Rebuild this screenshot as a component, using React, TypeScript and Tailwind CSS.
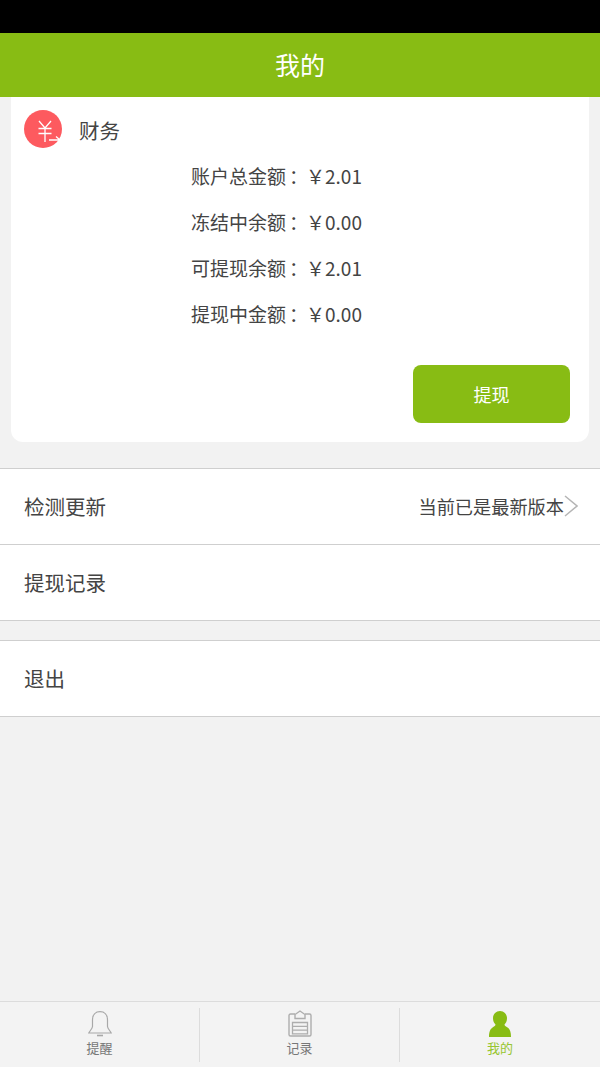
import React from 'react';

const font = { fontFamily: '"Noto Sans CJK SC", "Roboto", sans-serif' };

const balances = [
  { label: '账户总金额', value: '￥2.01' },
  { label: '冻结中余额', value: '￥0.00' },
  { label: '可提现余额', value: '￥2.01' },
  { label: '提现中金额', value: '￥0.00' },
];

function YuanIcon() {
  return (
    <svg width="38" height="38" viewBox="0 0 38 38">
      <circle cx="19" cy="19" r="19" fill="#fd5a5f" />
      <g fill="none" stroke="#fff" strokeWidth="1.3">
        <path d="M15 11l6 7 6-7M14.500 18.500h13M14.500 23.500h13M21 18v14" />
        <path d="M25 30h11M36 30l-4-3.500" />
      </g>
    </svg>
  );
}

function BellIcon() {
  return (
    <svg width="24" height="26" viewBox="0 0 24 26" fill="none" stroke="#a8a8a8" strokeWidth="1.2">
      <path d="M4.500 9C4.500 4 7.500 0.700 12 0.700S19.500 4 19.500 9v6.500c0 2 2.800 4.500 3.700 6.500H0.800c0.900-2 3.700-4.500 3.700-6.500z" />
      <path d="M9 24.500h6" strokeWidth="1.600" />
    </svg>
  );
}

function ClipboardIcon() {
  return (
    <svg width="24" height="27" viewBox="0 0 24 27" fill="none" stroke="#adadad" strokeWidth="1.4">
      <path d="M7 4H2.500A1.500 1.500 0 0 0 1 5.500v19A1.500 1.500 0 0 0 2.500 26h19a1.500 1.500 0 0 0 1.500-1.500v-19A1.500 1.500 0 0 0 21.500 4H17" />
      <path d="M7 8.500V4.500L12 1l5 3.500v4z" />
      <path d="M4.500 12.500h15v3.800h-15zM4.500 16.300h15v3.800h-15zM4.500 20.100h15v3.800h-15z" strokeWidth="1.300" />
    </svg>
  );
}

function PersonIcon() {
  return (
    <svg width="22" height="26" viewBox="0 0 22 26" fill="#88bc14">
      <path d="M11 0c3.900 0 7 3.100 7 7.200 0 2.800-1.100 4.800-2.500 6.300 0 1.300 1.100 1.800 2.600 2.700 2.600 1.500 3.900 4.300 3.900 9.800H0c0-5.500 1.300-8.300 3.900-9.800 1.500-0.900 2.600-1.400 2.600-2.700C5.100 12 4 10 4 7.200 4 3.100 7.100 0 11 0z" />
    </svg>
  );
}

function TabItem({ icon, label, active, last }: { icon: React.ReactNode; label: string; active?: boolean; last?: boolean }) {
  return (
    <div className={`w-[200px] flex flex-col items-center h-[54px] ${last ? '' : 'border-r border-[#dcdcdc]'}`}>
      <div className="h-[29px] flex items-end">{icon}</div>
      <span className={`text-[13px] leading-[19px] mt-[1px] ${active ? 'text-[#97c62f]' : 'text-[#777777]'}`}>{label}</span>
    </div>
  );
}

export default function App() {
  return (
    <div className="w-[600px] h-[1067px] bg-[#f2f2f2] flex flex-col overflow-hidden" style={font}>
      <div className="h-[33px] bg-black shrink-0" />
      <header className="h-[64px] bg-[#88bc14] shrink-0 flex items-center justify-center text-white text-[25px]">我的</header>

      <section className="mx-[11px] h-[345px] bg-white rounded-b-[12px] px-[13px] shrink-0">
        <div className="flex items-center h-[38px] mt-[13px] text-[20.500px] text-[#444444]">
          <YuanIcon />
          <span className="ml-[17px] mt-[3px]">财务</span>
        </div>
        <div className="flex flex-col gap-[18px] mt-[14px] ml-[167px] text-[#444444] text-[19px] leading-[28px]">
          {balances.map((b) => (
            <div key={b.label} className="flex">
              <span>{b.label}</span>
              <span className="w-[20px] pl-[3px]">：</span>
              <span>{b.value}</span>
            </div>
          ))}
        </div>
        <div className="flex justify-end mt-[37px] mr-[6px]">
          <button className="w-[157px] h-[58px] bg-[#88bc14] rounded-[8px] text-white text-[18px]">提现</button>
        </div>
      </section>

      <div className="mt-[26px] bg-white border-y border-[#cfcfcf] shrink-0">
        <div className="h-[76px] flex items-center justify-between pl-[24px] text-[20.500px] text-[#444444] border-b border-[#cfcfcf]">
          <span>检测更新</span>
          <div className="flex items-center pr-[22px]">
            <span className="text-[18.200px]">当前已是最新版本</span>
            <svg width="14" height="22" viewBox="0 0 14 22" fill="none" stroke="#b5b5b5" strokeWidth="1.500">
              <path d="M1 1l12 10L1 21" />
            </svg>
          </div>
        </div>
        <div className="h-[75px] flex items-center pl-[24px] text-[20.500px] text-[#444444]">提现记录</div>
      </div>

      <div className="mt-[19px] h-[77px] bg-white border-y border-[#cfcfcf] flex items-center pl-[24px] text-[20.500px] text-[#444444] shrink-0">退出</div>

      <div className="flex-1" />

      <nav className="h-[66px] bg-[#f3f3f3] border-t border-[#dcdcdc] pt-[6px] flex shrink-0">
        <TabItem icon={<BellIcon />} label="提醒" />
        <TabItem icon={<ClipboardIcon />} label="记录" />
        <TabItem icon={<PersonIcon />} label="我的" active last />
      </nav>
    </div>
  );
}
